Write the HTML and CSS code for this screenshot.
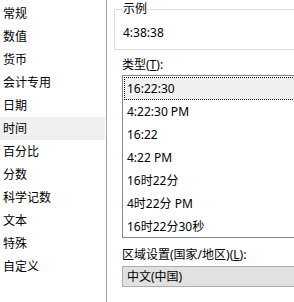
FILE: index.html
```html
<!DOCTYPE html>
<html lang="zh-CN">
<head>
<meta charset="utf-8">
<link rel="stylesheet" href="styles.css">
</head>
<body>
<div class="dialog">
  <ul class="cats">
    <li class="cat">常规</li>
    <li class="cat">数值</li>
    <li class="cat">货币</li>
    <li class="cat">会计专用</li>
    <li class="cat">日期</li>
    <li class="cat cat-sel">时间</li>
    <li class="cat">百分比</li>
    <li class="cat">分数</li>
    <li class="cat">科学记数</li>
    <li class="cat">文本</li>
    <li class="cat">特殊</li>
    <li class="cat">自定义</li>
  </ul>
  <div class="pane">
    <fieldset class="group">
      <legend class="legend">示例</legend>
      <div class="sample">4:38:38</div>
    </fieldset>
    <div class="label label-type">类型(<u>T</u>):</div>
    <ul class="types">
      <li class="type type-sel">16:22:30</li>
      <li class="type">4:22:30 PM</li>
      <li class="type">16:22</li>
      <li class="type">4:22 PM</li>
      <li class="type">16时22分</li>
      <li class="type">4时22分 PM</li>
      <li class="type">16时22分30秒</li>
    </ul>
    <div class="label label-locale">区域设置(国家/地区)(<u>L</u>):</div>
    <div class="combo">中文(中国)</div>
  </div>
</div>
</body>
</html>
```
FILE: styles.css
```css
html, body {
  margin: 0;
  padding: 0;
  background: #ffffff;
  overflow: hidden;
}
body {
  font-family: "Noto Sans", "Noto Sans CJK SC", sans-serif;
  font-size: 12px;
  line-height: 16px;
  color: #000000;
}
.dialog {
  display: flex;
  width: 294px;
  height: 302px;
  overflow: hidden;
}
.cats {
  list-style: none;
  margin: 0;
  padding: 2px 1px 0 0;
  width: 105px;
  flex: 0 0 105px;
  border-right: 1px solid #a0a0a0;
}
.cat {
  height: 23px;
  line-height: 23px;
  padding-left: 3px;
}
.cat-sel {
  background: #f0f0f0;
}
.pane {
  flex: 0 0 260px;
  width: 260px;
  display: flex;
  flex-direction: column;
  align-items: flex-start;
}
.group {
  margin: 1px 0 0 7px;
  padding: 0 0 8px 7px;
  border: 1px solid #dcdcdc;
  width: 240px;
  box-sizing: border-box;
}
.legend {
  padding: 0 1px;
  line-height: 16px;
}
.sample {
  margin: 8px 0 0 1px;
}
.label {
  margin-left: 15px;
}
.label-type {
  margin-top: 7px;
  margin-bottom: 2px;
}
.types {
  list-style: none;
  margin: 0 0 0 15px;
  padding: 1px 0 0 1px;
  width: 220px;
  height: 163px;
  box-sizing: border-box;
  border: 1px solid #828790;
}
.type {
  height: 23px;
  line-height: 21px;
  padding-left: 2px;
  border: 1px solid transparent;
  box-sizing: border-box;
}
.type-sel {
  background: #f0f0f0;
  border: 1px dotted #000000;
}
.label-locale {
  margin-top: 9px;
  margin-bottom: 3px;
}
.combo {
  margin-left: 15px;
  width: 220px;
  height: 21px;
  box-sizing: border-box;
  border: 1px solid #adadad;
  background: #e1e1e1;
  padding-left: 4px;
  line-height: 19px;
}
```
